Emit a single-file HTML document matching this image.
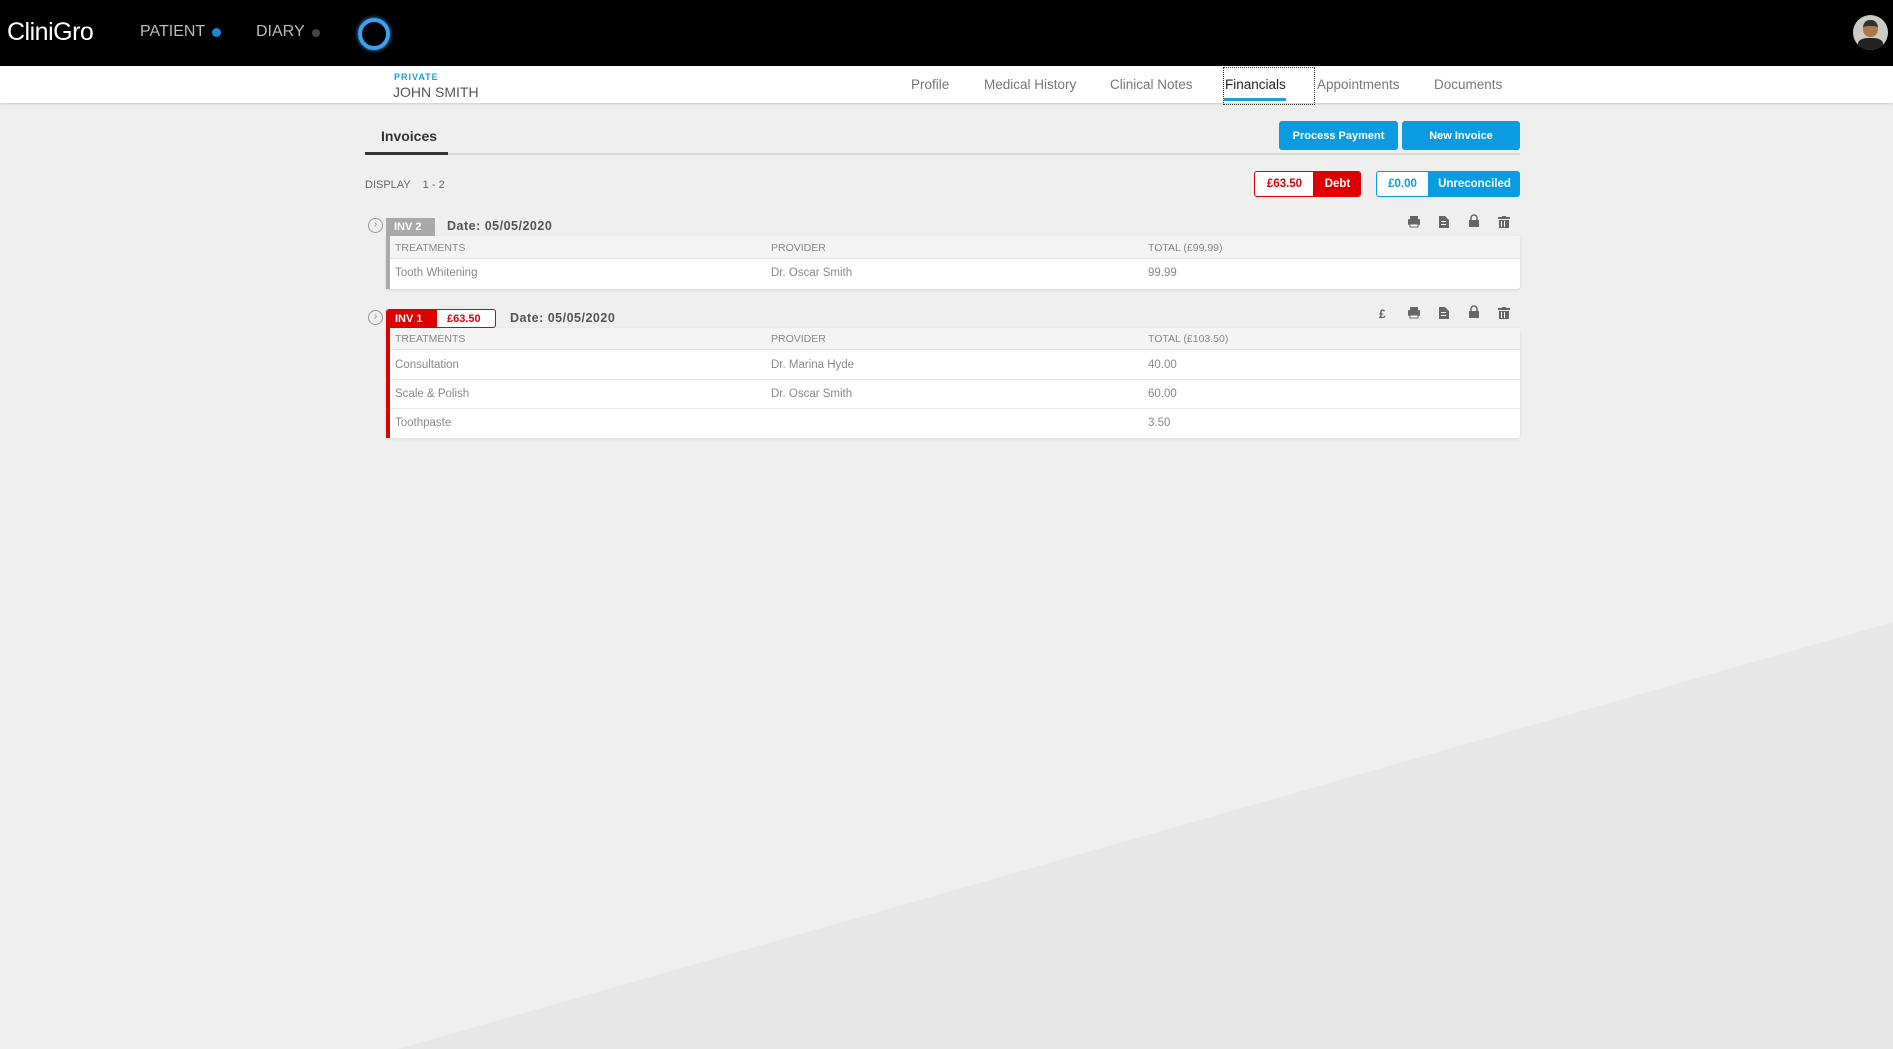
<!DOCTYPE html>
<html><head><meta charset="utf-8"><style>
*{margin:0;padding:0;box-sizing:border-box}
body{width:1893px;height:1049px;overflow:hidden;background:#efefef;font-family:"Liberation Sans",sans-serif;position:relative}
.a{position:absolute;white-space:nowrap}
.hdr{left:0;top:0;width:1893px;height:66px;background:#000}
.sub{left:0;top:66px;width:1893px;height:37px;background:#fff;box-shadow:0 1px 2px rgba(0,0,0,.15)}
.nav{top:77px;font-size:13.5px;color:#777}
.btn{background:#0a9be0;color:#fff;font-size:11px;font-weight:bold;text-align:center;line-height:30px;border-radius:3px;height:29px}
.th{font-size:10.5px;color:#888}
.td{font-size:11.5px;color:#888}
.card{background:#fff;box-shadow:0 1px 3px rgba(0,0,0,.1);border-radius:0 3px 3px 0}
</style></head><body>
<svg class="a" style="left:0;top:0" width="1893" height="1049"><polygon points="398,1049 1893,622 1893,1049" fill="#e8e8e8"/></svg>
<div class="a hdr"></div>
<div class="a" style="left:7px;top:18px;color:#fff;font-size:25px;letter-spacing:-0.5px">CliniGro</div>
<div class="a" style="left:140px;top:23px;color:#bbb;font-size:16px">PATIENT</div>
<div class="a" style="left:212px;top:28px;width:9px;height:9px;border-radius:50%;background:#1e88d8"></div>
<div class="a" style="left:256px;top:23px;color:#bbb;font-size:16px">DIARY</div>
<div class="a" style="left:312px;top:29px;width:8px;height:8px;border-radius:50%;background:#444"></div>
<div class="a" style="left:358px;top:18px;width:32px;height:32px;border-radius:50%;border:4px solid #3aa0f0;box-shadow:0 0 4px #3aa0f0"></div>
<div class="a" style="left:1853px;top:15px;width:35px;height:35px;border-radius:50%;background:#c9ccc4;overflow:hidden"><div style="position:absolute;left:10px;top:5px;width:15px;height:17px;border-radius:45%;background:#b07848;border-top:6px solid #333"></div><div style="position:absolute;left:5px;top:23px;width:25px;height:14px;border-radius:40% 40% 0 0;background:#222"></div></div>
<div class="a sub"></div>
<div class="a" style="left:394px;top:72px;font-size:9px;font-weight:bold;color:#1e9ae0;letter-spacing:1px">PRIVATE</div>
<div class="a" style="left:393px;top:84px;font-size:14px;color:#555">JOHN SMITH</div>
<div class="a nav" style="left:911px">Profile</div>
<div class="a nav" style="left:984px">Medical History</div>
<div class="a nav" style="left:1110px">Clinical Notes</div>
<div class="a nav" style="left:1225px;color:#222">Financials</div>
<div class="a" style="left:1223px;top:67px;width:92px;height:38px;border:1px dotted #333"></div>
<div class="a" style="left:1224px;top:98px;width:62px;height:3px;background:#1e9ae0"></div>
<div class="a nav" style="left:1317px">Appointments</div>
<div class="a nav" style="left:1434px">Documents</div>

<div class="a" style="left:381px;top:128px;font-size:14px;font-weight:bold;color:#333">Invoices</div>
<div class="a" style="left:365px;top:153px;width:1155px;height:2px;background:#d6d6d6"></div>
<div class="a" style="left:365px;top:152px;width:83px;height:3px;background:#333"></div>
<div class="a btn" style="left:1279px;top:121px;width:119px">Process Payment</div>
<div class="a btn" style="left:1402px;top:121px;width:118px">New Invoice</div>

<div class="a" style="left:365px;top:179px;font-size:11px;color:#666">DISPLAY &nbsp;&nbsp;&nbsp;1 - 2</div>
<div class="a" style="left:1254px;top:171px;width:107px;height:26px;border:1px solid #d00;border-radius:3px;background:#fff;overflow:hidden;font-size:11.5px;font-weight:bold;line-height:24px"><span style="position:absolute;left:0;width:59px;text-align:center;color:#d00">£63.50</span><span style="position:absolute;left:58px;width:49px;height:26px;background:#d00;color:#fff;text-align:center">Debt</span></div>
<div class="a" style="left:1376px;top:171px;width:144px;height:26px;border:1px solid #0a9be0;border-radius:3px;background:#fff;overflow:hidden;font-size:11.5px;font-weight:bold;line-height:24px"><span style="position:absolute;left:0;width:51px;text-align:center;color:#0a9be0">£0.00</span><span style="position:absolute;left:51px;width:93px;height:26px;background:#0a9be0;color:#fff;text-align:center">Unreconciled</span></div>

<!-- INV2 -->
<div class="a" style="left:368px;top:218px;width:15px;height:15px;border-radius:50%;border:1px solid #999;font-size:10px;color:#888;text-align:center;line-height:12px">›</div>
<div class="a" style="left:386px;top:218px;width:49px;height:18px;background:#a9a9a9;color:#fff;font-size:11px;font-weight:bold;line-height:18px;padding-left:8px">INV 2</div>
<div class="a" style="left:447px;top:219px;font-size:12.5px;font-weight:bold;color:#555;letter-spacing:.5px">Date: 05/05/2020</div>
<div class="a card" style="left:386px;top:236px;width:1134px;height:53px;border-left:4px solid #a9a9a9"></div>
<div class="a" style="left:390px;top:236px;width:1130px;height:23px;background:#f4f4f4;border-bottom:1px solid #e2e2e2"></div>
<div class="a th" style="left:395px;top:242px">TREATMENTS</div>
<div class="a th" style="left:771px;top:242px">PROVIDER</div>
<div class="a th" style="left:1148px;top:242px">TOTAL (£99.99)</div>
<div class="a td" style="left:395px;top:267px">Tooth Whitening</div>
<div class="a td" style="left:771px;top:267px">Dr. Oscar Smith</div>
<div class="a td" style="left:1148px;top:267px">99.99</div>

<!-- INV1 -->
<div class="a" style="left:368px;top:310px;width:15px;height:15px;border-radius:50%;border:1px solid #999;font-size:10px;color:#888;text-align:center;line-height:12px">›</div>
<div class="a" style="left:386px;top:309px;width:110px;height:19px;border:1px solid #d00;border-radius:3px 3px 3px 0;background:#fff;overflow:hidden;font-size:11px;font-weight:bold;line-height:18px"><span style="position:absolute;left:0;width:50px;height:19px;background:#d00;color:#fff;padding-left:8px">INV 1</span><span style="position:absolute;left:60px;color:#d00">£63.50</span></div>
<div class="a" style="left:510px;top:311px;font-size:12.5px;font-weight:bold;color:#555;letter-spacing:.5px">Date: 05/05/2020</div>
<div class="a card" style="left:386px;top:328px;width:1134px;height:110px;border-left:4px solid #d00"></div>
<div class="a" style="left:390px;top:328px;width:1130px;height:22px;background:#f4f4f4;border-bottom:1px solid #e2e2e2"></div>
<div class="a" style="left:390px;top:379px;width:1130px;height:1px;background:#e6e6e6"></div>
<div class="a" style="left:390px;top:408px;width:1130px;height:1px;background:#e6e6e6"></div>
<div class="a th" style="left:395px;top:333px">TREATMENTS</div>
<div class="a th" style="left:771px;top:333px">PROVIDER</div>
<div class="a th" style="left:1148px;top:333px">TOTAL (£103.50)</div>
<div class="a td" style="left:395px;top:359px">Consultation</div>
<div class="a td" style="left:771px;top:359px">Dr. Marina Hyde</div>
<div class="a td" style="left:1148px;top:359px">40.00</div>
<div class="a td" style="left:395px;top:388px">Scale &amp; Polish</div>
<div class="a td" style="left:771px;top:388px">Dr. Oscar Smith</div>
<div class="a td" style="left:1148px;top:388px">60.00</div>
<div class="a td" style="left:395px;top:417px">Toothpaste</div>
<div class="a td" style="left:1148px;top:417px">3.50</div>

<svg class="a" style="left:0;top:0" width="1893" height="400" fill="#666">
<defs>
<g id="pr"><rect x="2" y="0" width="8" height="3"/><rect x="0" y="3" width="12" height="6" rx="1"/><rect x="2" y="8" width="8" height="3" fill="#fff" stroke="#666"/></g>
<g id="dc"><path d="M1 0h6l4 4v8H1z"/><rect x="3" y="5" width="5" height="1" fill="#fff"/><rect x="3" y="8" width="5" height="1" fill="#fff"/></g>
<g id="lk"><path d="M3 5V3a3 3 0 0 1 6 0v2" fill="none" stroke="#666" stroke-width="1.5"/><rect x="1" y="5" width="10" height="7"/></g>
<g id="tr"><rect x="0" y="1" width="12" height="2"/><rect x="4" y="0" width="4" height="1"/><rect x="1" y="4" width="10" height="8"/><rect x="3" y="5" width="1" height="6" fill="#fff"/><rect x="6" y="5" width="1" height="6" fill="#fff"/></g>
</defs>
<use href="#pr" x="1408" y="216"/><use href="#dc" x="1438" y="216"/><use href="#lk" x="1468" y="215"/><use href="#tr" x="1498" y="216"/>
<text x="1379" y="318" font-size="12" font-weight="bold" fill="#666" font-family="Liberation Sans">£</text>
<use href="#pr" x="1408" y="307"/><use href="#dc" x="1438" y="307"/><use href="#lk" x="1468" y="306"/><use href="#tr" x="1498" y="307"/>
</svg>
</body></html>
